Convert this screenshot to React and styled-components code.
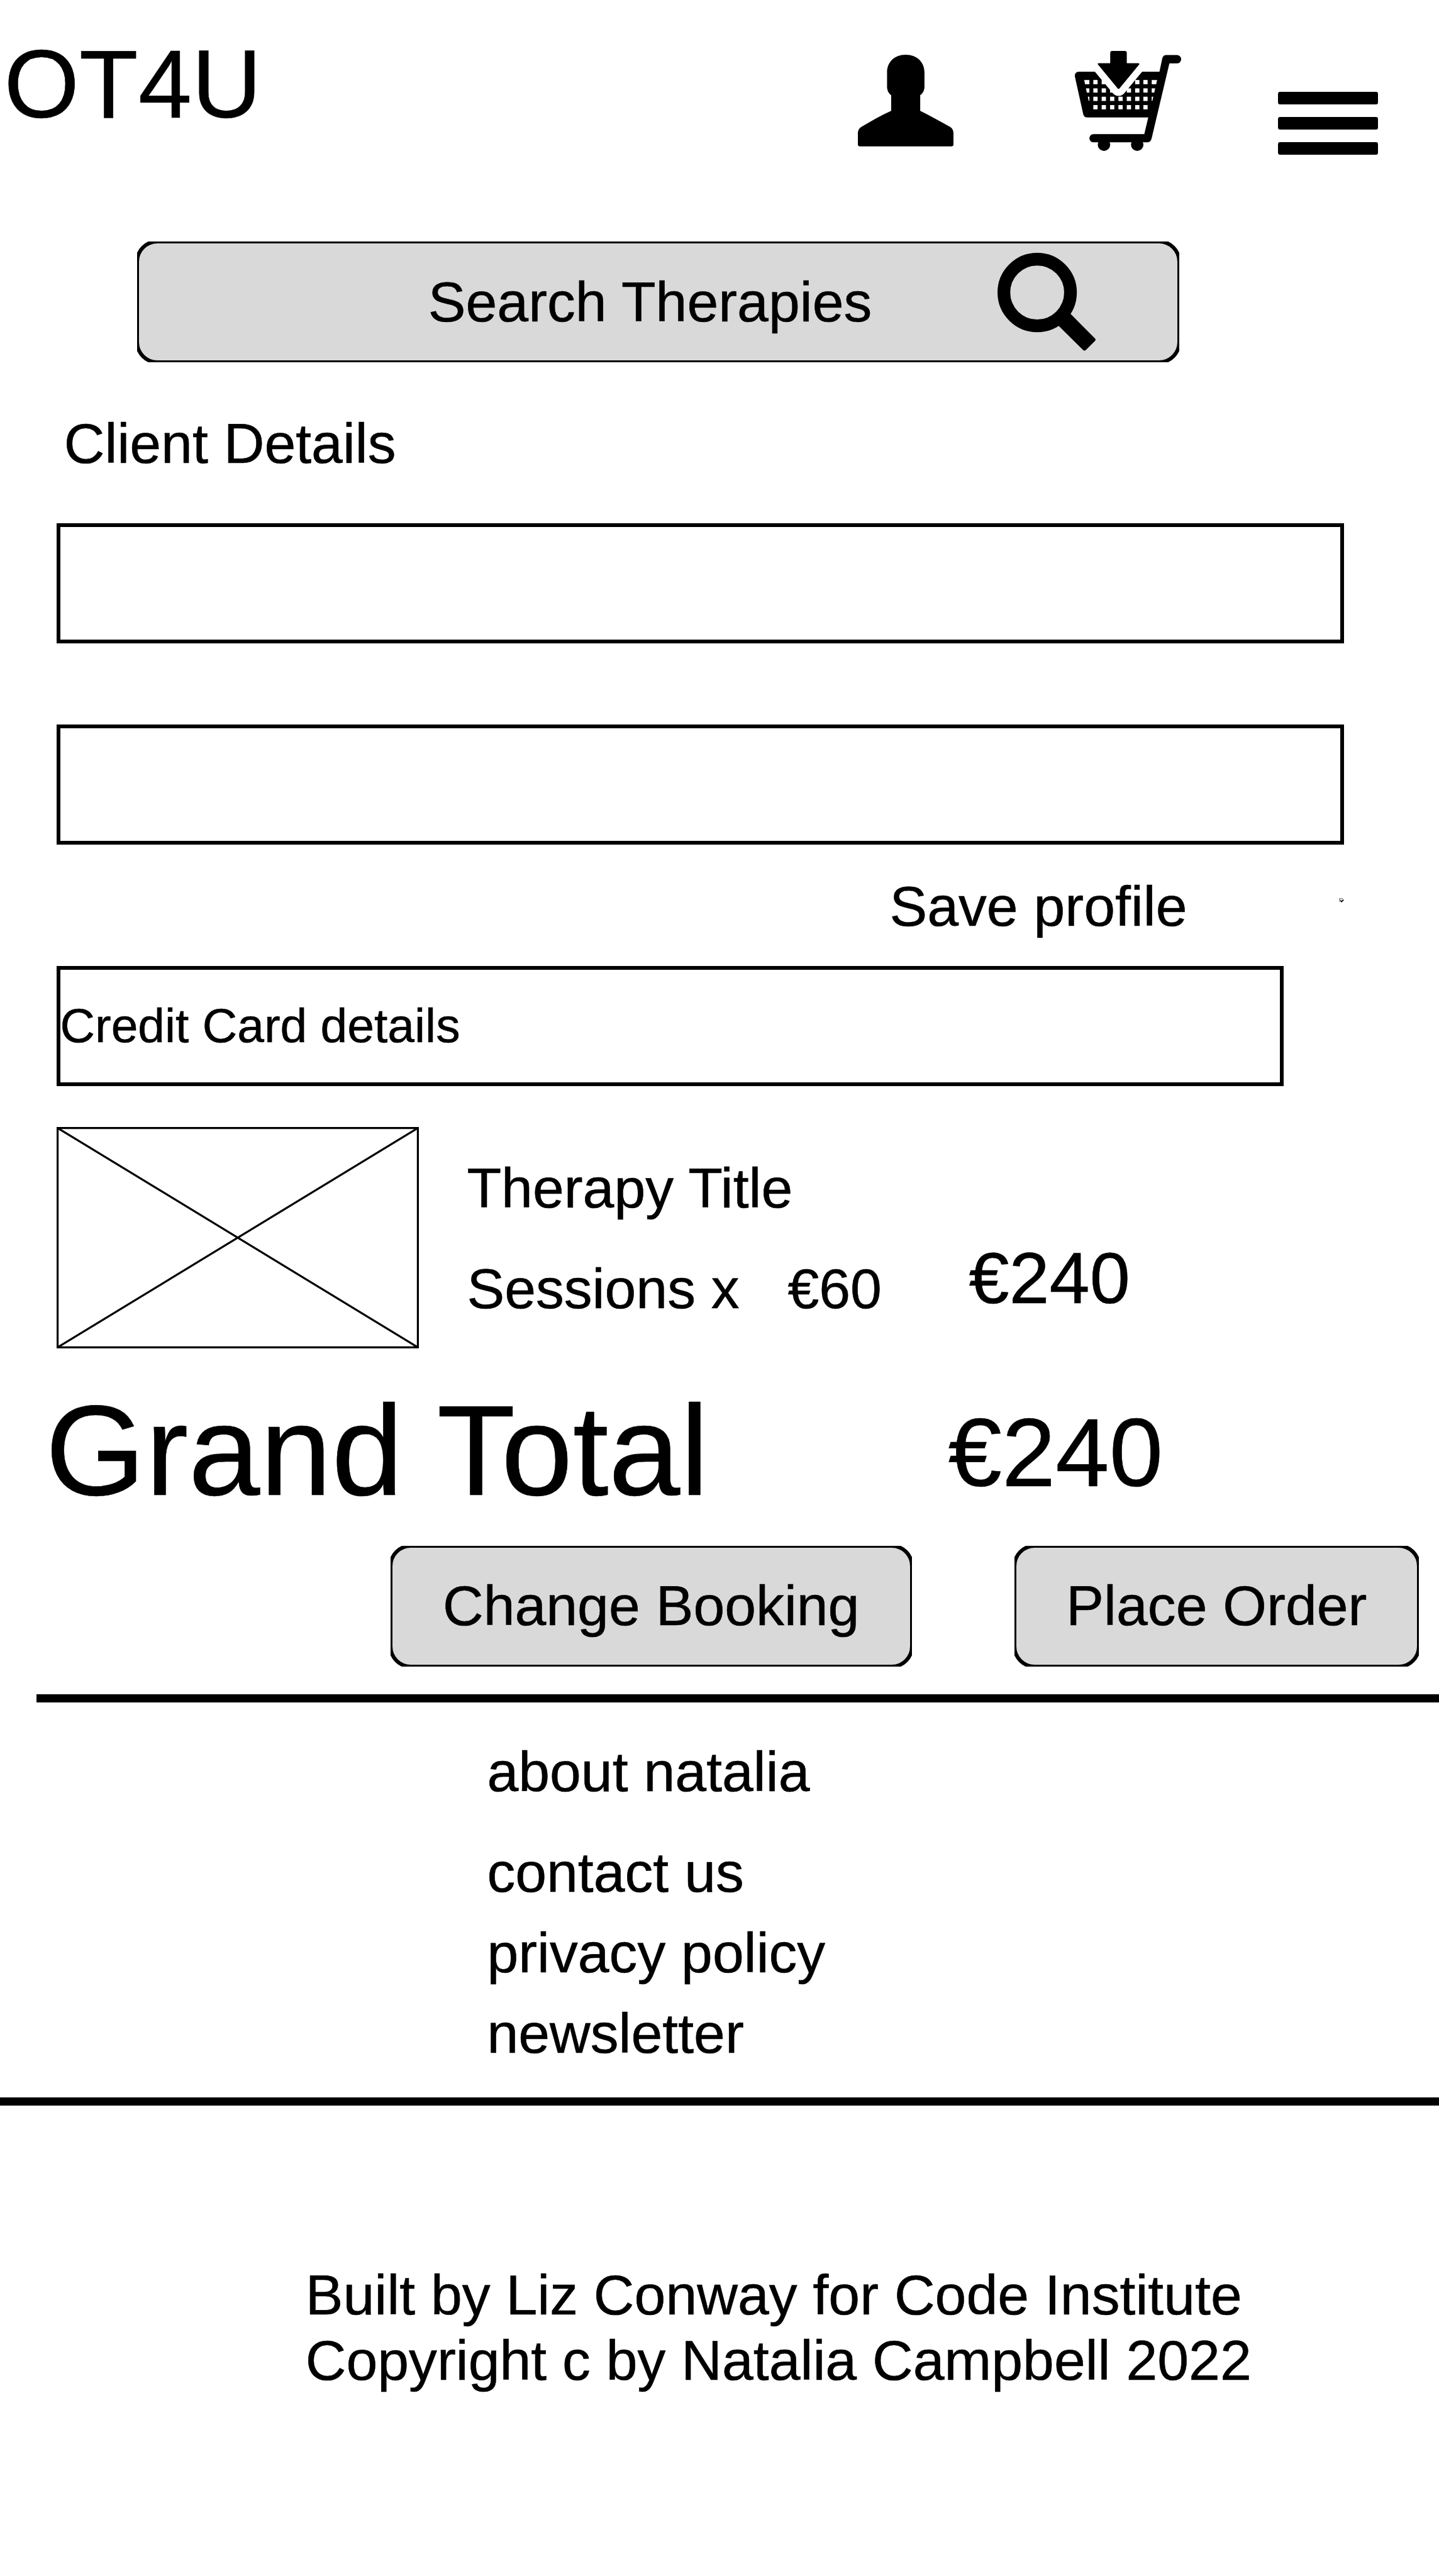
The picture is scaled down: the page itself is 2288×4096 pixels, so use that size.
import React from "react";
import styled, { createGlobalStyle } from "styled-components";

// The wireframe is laid out on a 715 x 1280 grid; one grid unit is 3.2px.
const u = (n) => `${+(n * 3.2).toFixed(2)}px`;
// Icon paths are drawn on a finer grid of 12.75 steps to a unit.
const step = (n) => u(n / 12.75);

const GlobalStyle = createGlobalStyle`
  * { box-sizing: border-box; }
  html, body { margin: 0; padding: 0; background: #fff; }
  body { overflow: hidden; }
`;

const Page = styled.div`
  display: flex;
  flex-direction: column;
  width: ${u(715)};
  height: ${u(1280)};
  overflow: hidden;
  background: #fff;
  color: #000;
  font-family: "Liberation Sans", Arial, Helvetica, sans-serif;
  font-size: ${u(28)};
  line-height: ${u(32)};
  font-variant-ligatures: none;
  -webkit-text-stroke: 0.6px #000;
  white-space: nowrap;
`;

const Header = styled.header`
  display: flex;
  flex: none;
  align-items: flex-start;
  height: ${u(120)};
`;

const Logo = styled.div`
  flex: none;
  width: ${u(426.35)};
  padding: ${u(14)} 0 0 ${u(2)};
  font-size: ${u(48)};
  line-height: ${u(56)};
`;

const Glyph = styled.svg`
  display: block;
  flex: none;
  width: ${(p) => step(p.$w)};
  height: ${(p) => step(p.$h)};
  margin-top: ${(p) => u(p.$top || 0)};
  margin-left: ${(p) => u(p.$left || 0)};
`;

const MenuButton = styled.div`
  display: flex;
  flex-direction: column;
  gap: ${u(6.2)};
  width: ${u(49.7)};
  margin: ${u(45.62)} 0 0 ${u(48.15)};
`;

const MenuBar = styled.span`
  height: ${u(6.25)};
  border-radius: ${u(1)};
  background: #000;
`;

const ButtonClip = styled.div`
  flex: none;
  width: ${(p) => u(p.$width)};
  height: ${u(60)};
  margin-left: ${(p) => u(p.$left)};
  overflow: hidden;
`;

const ButtonFace = styled.div`
  display: flex;
  align-items: center;
  justify-content: ${(p) => (p.$start ? "flex-start" : "center")};
  height: calc(100% + 6px);
  margin: -3px;
  padding-left: ${(p) => u(p.$start || 0)};
  border: 6px solid #000;
  border-radius: ${u(11)};
  background: #d9d9d9;
`;

const Heading = styled.div`
  flex: none;
  margin: ${u(24.3)} 0 ${u(23.7)} ${u(31.8)};
`;

const Field = styled.div`
  display: flex;
  flex: none;
  align-items: center;
  width: calc(${(p) => u(p.$width)} - 1px);
  height: 191px;
  margin: ${(p) => u(p.$top || 0)} 0 1px ${u(28)};
  padding-bottom: 2px;
  border: 6px solid #000;
  font-size: ${u(24)};
`;

const SaveRow = styled.div`
  display: flex;
  flex: none;
  align-items: flex-start;
  height: ${u(32)};
  margin: ${u(14.3)} 0 ${u(13.7)};
  padding-left: ${u(442)};
`;

const SaveLabel = styled.span`
  width: ${u(223.4)};
`;

const Item = styled.div`
  display: flex;
  flex: none;
  align-items: flex-start;
  height: ${u(110)};
  margin: ${u(20)} 0 0 ${u(28)};
`;

const ItemInfo = styled.div`
  display: flex;
  flex-direction: column;
  gap: ${u(18)};
  width: ${u(273.4)};
  padding: ${u(14.3)} 0 0 ${u(24)};
`;

const ItemLine = styled.div`
  display: flex;
`;

const Sessions = styled.span`
  width: ${u(159.4)};
`;

const Subtotal = styled.div`
  padding-top: ${u(55)};
  font-size: ${u(36)};
  line-height: ${u(40)};
`;

const TotalRow = styled.div`
  display: flex;
  flex: none;
  align-items: flex-start;
  height: ${u(72)};
  margin: ${u(14.8)} 0 ${u(11.2)} ${u(22.5)};
`;

const TotalLabel = styled.div`
  width: ${u(448.6)};
  font-size: ${u(64)};
  line-height: ${u(72)};
`;

const TotalPrice = styled.div`
  padding-top: ${u(9.2)};
  font-size: ${u(48)};
  line-height: ${u(56)};
`;

const Row = styled.div`
  display: flex;
  flex: none;
`;

const Rule = styled.div`
  flex: none;
  height: 13px;
  margin-top: ${(p) => u(p.$top)};
  margin-left: ${(p) => u(p.$left || 0)};
  background: #000;
`;

const Links = styled.nav`
  display: flex;
  flex: none;
  flex-direction: column;
  gap: ${u(8)};
  margin: ${u(18.3)} 0 0 ${u(242)};
`;

const Link = styled.span`
  margin-bottom: ${(p) => u(p.$after || 0)};
`;

const Footer = styled.footer`
  flex: none;
  margin: ${u(78.1)} 0 0 ${u(151.8)};
  line-height: ${u(32.5)};
`;

function UserIcon() {
  return (
    <Glyph $w={606} $h={581} $top={27.3} viewBox="96 78 606 581">
      <path d="M281 190C281 124 329 78 399 78S518 124 518 190V280C518 303 508 323 491 334V434C553 464 620 502 680 535C697 545 702 560 702 580V646Q702 659 689 659H109Q96 659 96 646V580C96 557 103 545 118 535C180 500 242 463 307 434V334C290 323 281 303 281 280Z" />
    </Glyph>
  );
}

const fullHoles = [208, 261, 314, 367, 420, 473, 525];
const holeRows = [266, 319, 372, 425];

function CartIcon() {
  return (
    <Glyph $w={673} $h={633} $top={25.25} $left={60.3} viewBox="91 82 673 633">
      <path d="M117 213H627L645 129Q650 108 671 108H738A26.500 26.500 0 0 1 738 161H690L577 638Q571 661 550 661H209A26 26 0 0 1 209 609H531L556 503H170Q149 503 144 482L91 243Q90 213 117 213Z" />
      <circle cx="275.500" cy="676" r="39.500" />
      <circle cx="486" cy="676" r="39.500" />
      <g fill="#fff">
        {holeRows.map((y) =>
          fullHoles.map((x) => <rect key={`${x}-${y}`} x={x} y={y} width="27" height="27" />)
        )}
        <path d="M150 266H183V293H156ZM161 319H183V346H167ZM173 372H183V399H179Z" />
        <path d="M578 266H612L606 293H578ZM578 319H600L594 346H578ZM578 372H588L582 399H578Z" />
        <path d="M217 212L325 342Q343 367 368 367T411 342L518 212L499 150H236Z" />
      </g>
      <path d="M327 82H408Q420 82 420 94V160H495Q502 162 498 169L374 319Q368 326 362 319L238 169Q233 162 240 160H315V94Q315 82 327 82Z" />
    </Glyph>
  );
}

function SearchIcon() {
  return (
    <Glyph $w={622} $h={622} viewBox="139 102 622 622">
      <circle cx="390.500" cy="353.500" r="211" fill="none" stroke="#000" strokeWidth="80.500" />
      <path d="M590 477L756 644Q764 653 756 661L699 718Q690 726 681 718L515 553Z" />
    </Glyph>
  );
}

const SearchContent = styled.div`
  display: flex;
  align-items: center;
  width: ${u(368)};
`;

const SearchLabel = styled.span`
  width: ${u(282.8)};
`;

function CheckMark() {
  return (
    <Glyph $w={31} $h={28} $top={12.1} viewBox="114 82 31 28">
      <path d="M114 82H138V85H117V105H114Z" fill="#999" />
      <path d="M117 85H138V88H120V103H117Z" fill="#666" />
      <path d="M136 86V92M119 104H124" stroke="#ccc" strokeWidth="2" />
      <path d="M123 96L130 105L143 92" fill="none" stroke="#000" strokeWidth="7" />
    </Glyph>
  );
}

function ImagePlaceholder() {
  return (
    <Glyph $w={2295} $h={1402.5} viewBox="0 0 180 110" fill="none" stroke="#000">
      <path d="M0.500 0.500H179.500V109.500H0.500ZM0.500 0.500L179.500 109.500M179.500 0.500L0.500 109.500" />
    </Glyph>
  );
}

export default function App() {
  return (
    <Page>
      <GlobalStyle />
      <Header>
        <Logo>OT4U</Logo>
        <UserIcon />
        <CartIcon />
        <MenuButton>
          <MenuBar />
          <MenuBar />
          <MenuBar />
        </MenuButton>
      </Header>

      <ButtonClip $width={518} $left={68}>
        <ButtonFace $start={143.8}>
          <SearchContent>
            <SearchLabel>Search Therapies</SearchLabel>
            <SearchIcon />
          </SearchContent>
        </ButtonFace>
      </ButtonClip>

      <Heading>Client Details</Heading>
      <Field $width={640} />
      <Field $width={640} $top={40} />
      <SaveRow>
        <SaveLabel>Save profile</SaveLabel>
        <CheckMark />
      </SaveRow>
      <Field $width={610}>Credit Card details</Field>

      <Item>
        <ImagePlaceholder />
        <ItemInfo>
          <ItemLine>Therapy Title</ItemLine>
          <ItemLine>
            <Sessions>Sessions x</Sessions>
            <span>€60</span>
          </ItemLine>
        </ItemInfo>
        <Subtotal>€240</Subtotal>
      </Item>

      <TotalRow>
        <TotalLabel>Grand Total</TotalLabel>
        <TotalPrice>€240</TotalPrice>
      </TotalRow>

      <Row>
        <ButtonClip $width={259} $left={194}>
          <ButtonFace>Change Booking</ButtonFace>
        </ButtonClip>
        <ButtonClip $width={201} $left={51}>
          <ButtonFace>Place Order</ButtonFace>
        </ButtonClip>
      </Row>

      <Rule $top={14} $left={18} />
      <Links>
        <Link $after={10}>about natalia</Link>
        <Link>contact us</Link>
        <Link>privacy policy</Link>
        <Link>newsletter</Link>
      </Links>
      <Rule $top={15.7} />

      <Footer>
        Built by Liz Conway for Code Institute
        <br />
        Copyright c by Natalia Campbell 2022
      </Footer>
    </Page>
  );
}
